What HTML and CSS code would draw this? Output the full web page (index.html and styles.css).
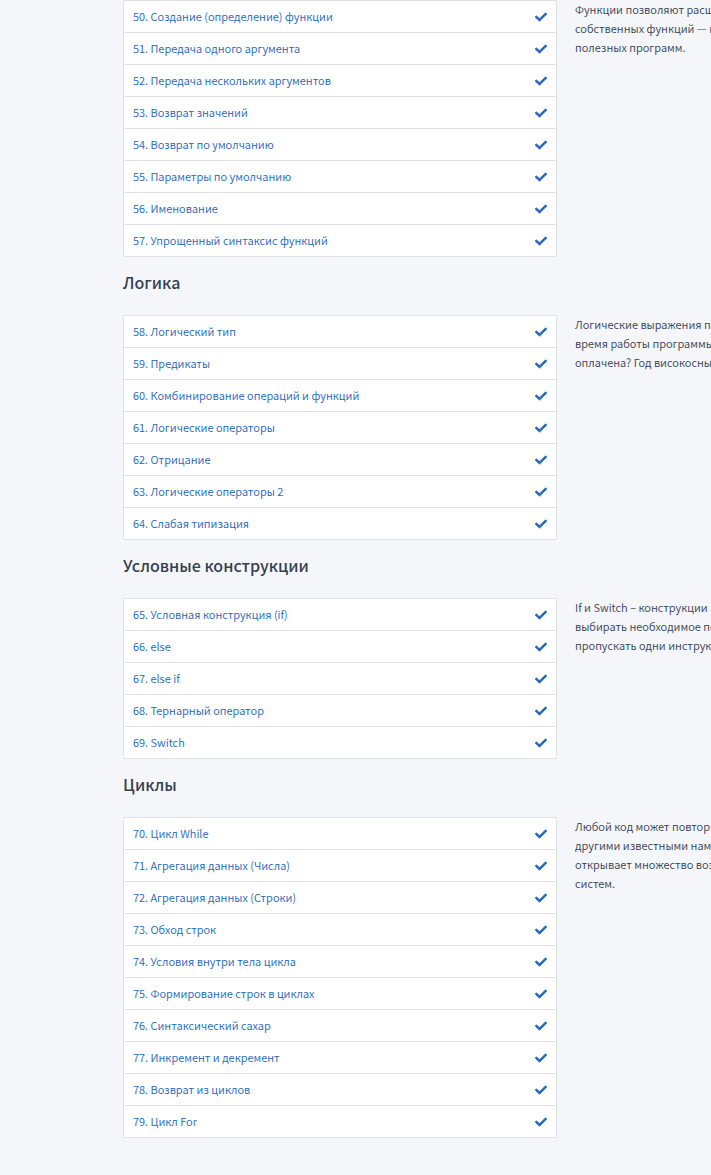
FILE: index.html
```html
<!DOCTYPE html>
<html lang="ru">
<head>
<meta charset="utf-8">
<meta name="viewport" content="width=device-width, initial-scale=1">
<title>Уроки</title>
<link rel="stylesheet" href="styles.css">
</head>
<body>
<svg class="sprite" aria-hidden="true">
  <symbol id="check" viewBox="0 0 512 512"><path d="M173.898 439.404l-166.4-166.4c-9.997-9.997-9.997-26.206 0-36.204l36.203-36.204c9.997-9.998 26.207-9.998 36.204 0L192 312.690 432.095 72.596c9.997-9.997 26.207-9.997 36.204 0l36.203 36.204c9.997 9.997 9.997 26.206 0 36.204l-294.400 294.401c-9.998 9.997-26.207 9.997-36.204-.001z"/></symbol>
</svg>
<main class="course">
  <section class="module">
    <ul class="lessons">
      <li class="lesson"><a class="link" href="#50">50. Создание (определение) функции</a><svg class="check"><use href="#check"/></svg></li>
      <li class="lesson"><a class="link" href="#51">51. Передача одного аргумента</a><svg class="check"><use href="#check"/></svg></li>
      <li class="lesson"><a class="link" href="#52">52. Передача нескольких аргументов</a><svg class="check"><use href="#check"/></svg></li>
      <li class="lesson"><a class="link" href="#53">53. Возврат значений</a><svg class="check"><use href="#check"/></svg></li>
      <li class="lesson"><a class="link" href="#54">54. Возврат по умолчанию</a><svg class="check"><use href="#check"/></svg></li>
      <li class="lesson"><a class="link" href="#55">55. Параметры по умолчанию</a><svg class="check"><use href="#check"/></svg></li>
      <li class="lesson"><a class="link" href="#56">56. Именование</a><svg class="check"><use href="#check"/></svg></li>
      <li class="lesson"><a class="link" href="#57">57. Упрощенный синтаксис функций</a><svg class="check"><use href="#check"/></svg></li>
    </ul>
    <p class="about">Функции позволяют расш<br>собственных функций — к<br>полезных программ.</p>
  </section>

  <h2 class="title">Логика</h2>
  <section class="module">
    <ul class="lessons">
      <li class="lesson"><a class="link" href="#58">58. Логический тип</a><svg class="check"><use href="#check"/></svg></li>
      <li class="lesson"><a class="link" href="#59">59. Предикаты</a><svg class="check"><use href="#check"/></svg></li>
      <li class="lesson"><a class="link" href="#60">60. Комбинирование операций и функций</a><svg class="check"><use href="#check"/></svg></li>
      <li class="lesson"><a class="link" href="#61">61. Логические операторы</a><svg class="check"><use href="#check"/></svg></li>
      <li class="lesson"><a class="link" href="#62">62. Отрицание</a><svg class="check"><use href="#check"/></svg></li>
      <li class="lesson"><a class="link" href="#63">63. Логические операторы 2</a><svg class="check"><use href="#check"/></svg></li>
      <li class="lesson"><a class="link" href="#64">64. Слабая типизация</a><svg class="check"><use href="#check"/></svg></li>
    </ul>
    <p class="about">Логические выражения по<br>время работы программы<br>оплачена? Год високосны</p>
  </section>

  <h2 class="title">Условные конструкции</h2>
  <section class="module">
    <ul class="lessons">
      <li class="lesson"><a class="link" href="#65">65. Условная конструкция (if)</a><svg class="check"><use href="#check"/></svg></li>
      <li class="lesson"><a class="link" href="#66">66. else</a><svg class="check"><use href="#check"/></svg></li>
      <li class="lesson"><a class="link" href="#67">67. else if</a><svg class="check"><use href="#check"/></svg></li>
      <li class="lesson"><a class="link" href="#68">68. Тернарный оператор</a><svg class="check"><use href="#check"/></svg></li>
      <li class="lesson"><a class="link" href="#69">69. Switch</a><svg class="check"><use href="#check"/></svg></li>
    </ul>
    <p class="about">If и Switch – конструкции J<br>выбирать необходимое по<br>пропускать одни инструкц</p>
  </section>

  <h2 class="title">Циклы</h2>
  <section class="module">
    <ul class="lessons">
      <li class="lesson"><a class="link" href="#70">70. Цикл While</a><svg class="check"><use href="#check"/></svg></li>
      <li class="lesson"><a class="link" href="#71">71. Агрегация данных (Числа)</a><svg class="check"><use href="#check"/></svg></li>
      <li class="lesson"><a class="link" href="#72">72. Агрегация данных (Строки)</a><svg class="check"><use href="#check"/></svg></li>
      <li class="lesson"><a class="link" href="#73">73. Обход строк</a><svg class="check"><use href="#check"/></svg></li>
      <li class="lesson"><a class="link" href="#74">74. Условия внутри тела цикла</a><svg class="check"><use href="#check"/></svg></li>
      <li class="lesson"><a class="link" href="#75">75. Формирование строк в циклах</a><svg class="check"><use href="#check"/></svg></li>
      <li class="lesson"><a class="link" href="#76">76. Синтаксический сахар</a><svg class="check"><use href="#check"/></svg></li>
      <li class="lesson"><a class="link" href="#77">77. Инкремент и декремент</a><svg class="check"><use href="#check"/></svg></li>
      <li class="lesson"><a class="link" href="#78">78. Возврат из циклов</a><svg class="check"><use href="#check"/></svg></li>
      <li class="lesson"><a class="link" href="#79">79. Цикл For</a><svg class="check"><use href="#check"/></svg></li>
    </ul>
    <p class="about">Любой код может повторя<br>другими известными нам<br>открывает множество воз<br>систем.</p>
  </section>
</main>
</body>
</html>
```

FILE: styles.css
```css
* {
  box-sizing: border-box;
}

body {
  margin: 0;
  background: #f5f6fa;
  color: #343f52;
  font-family: "Noto Sans CJK SC", "Noto Sans", sans-serif;
  font-size: 11px;
  font-weight: 350;
  line-height: 19px;
}

.sprite {
  display: none;
}

.course {
  padding: 0 0 38px 123px;
  overflow: hidden;
}

.module {
  display: grid;
  grid-template-columns: minmax(0, 434px) minmax(0, 1fr);
  gap: 18px;
  align-items: start;
}

.lessons {
  margin: 0;
  padding: 0;
  list-style: none;
  background: #fff;
  border: 1px solid #dfe2e6;
  border-radius: 2px;
}

.lesson {
  display: flex;
  align-items: center;
  justify-content: space-between;
  padding: 6px 9px;
}

.lesson + .lesson {
  border-top: 1px solid #dfe2e6;
}

.link {
  color: #2366b8;
  text-decoration: none;
}

.check {
  width: 12px;
  height: 12px;
  fill: #2468bf;
}

.about {
  margin: 0;
  white-space: nowrap;
}

.title {
  margin: 0;
  padding: 12px 0 20px;
  font-size: 16px;
  font-weight: 500;
  line-height: 26px;
}
```
